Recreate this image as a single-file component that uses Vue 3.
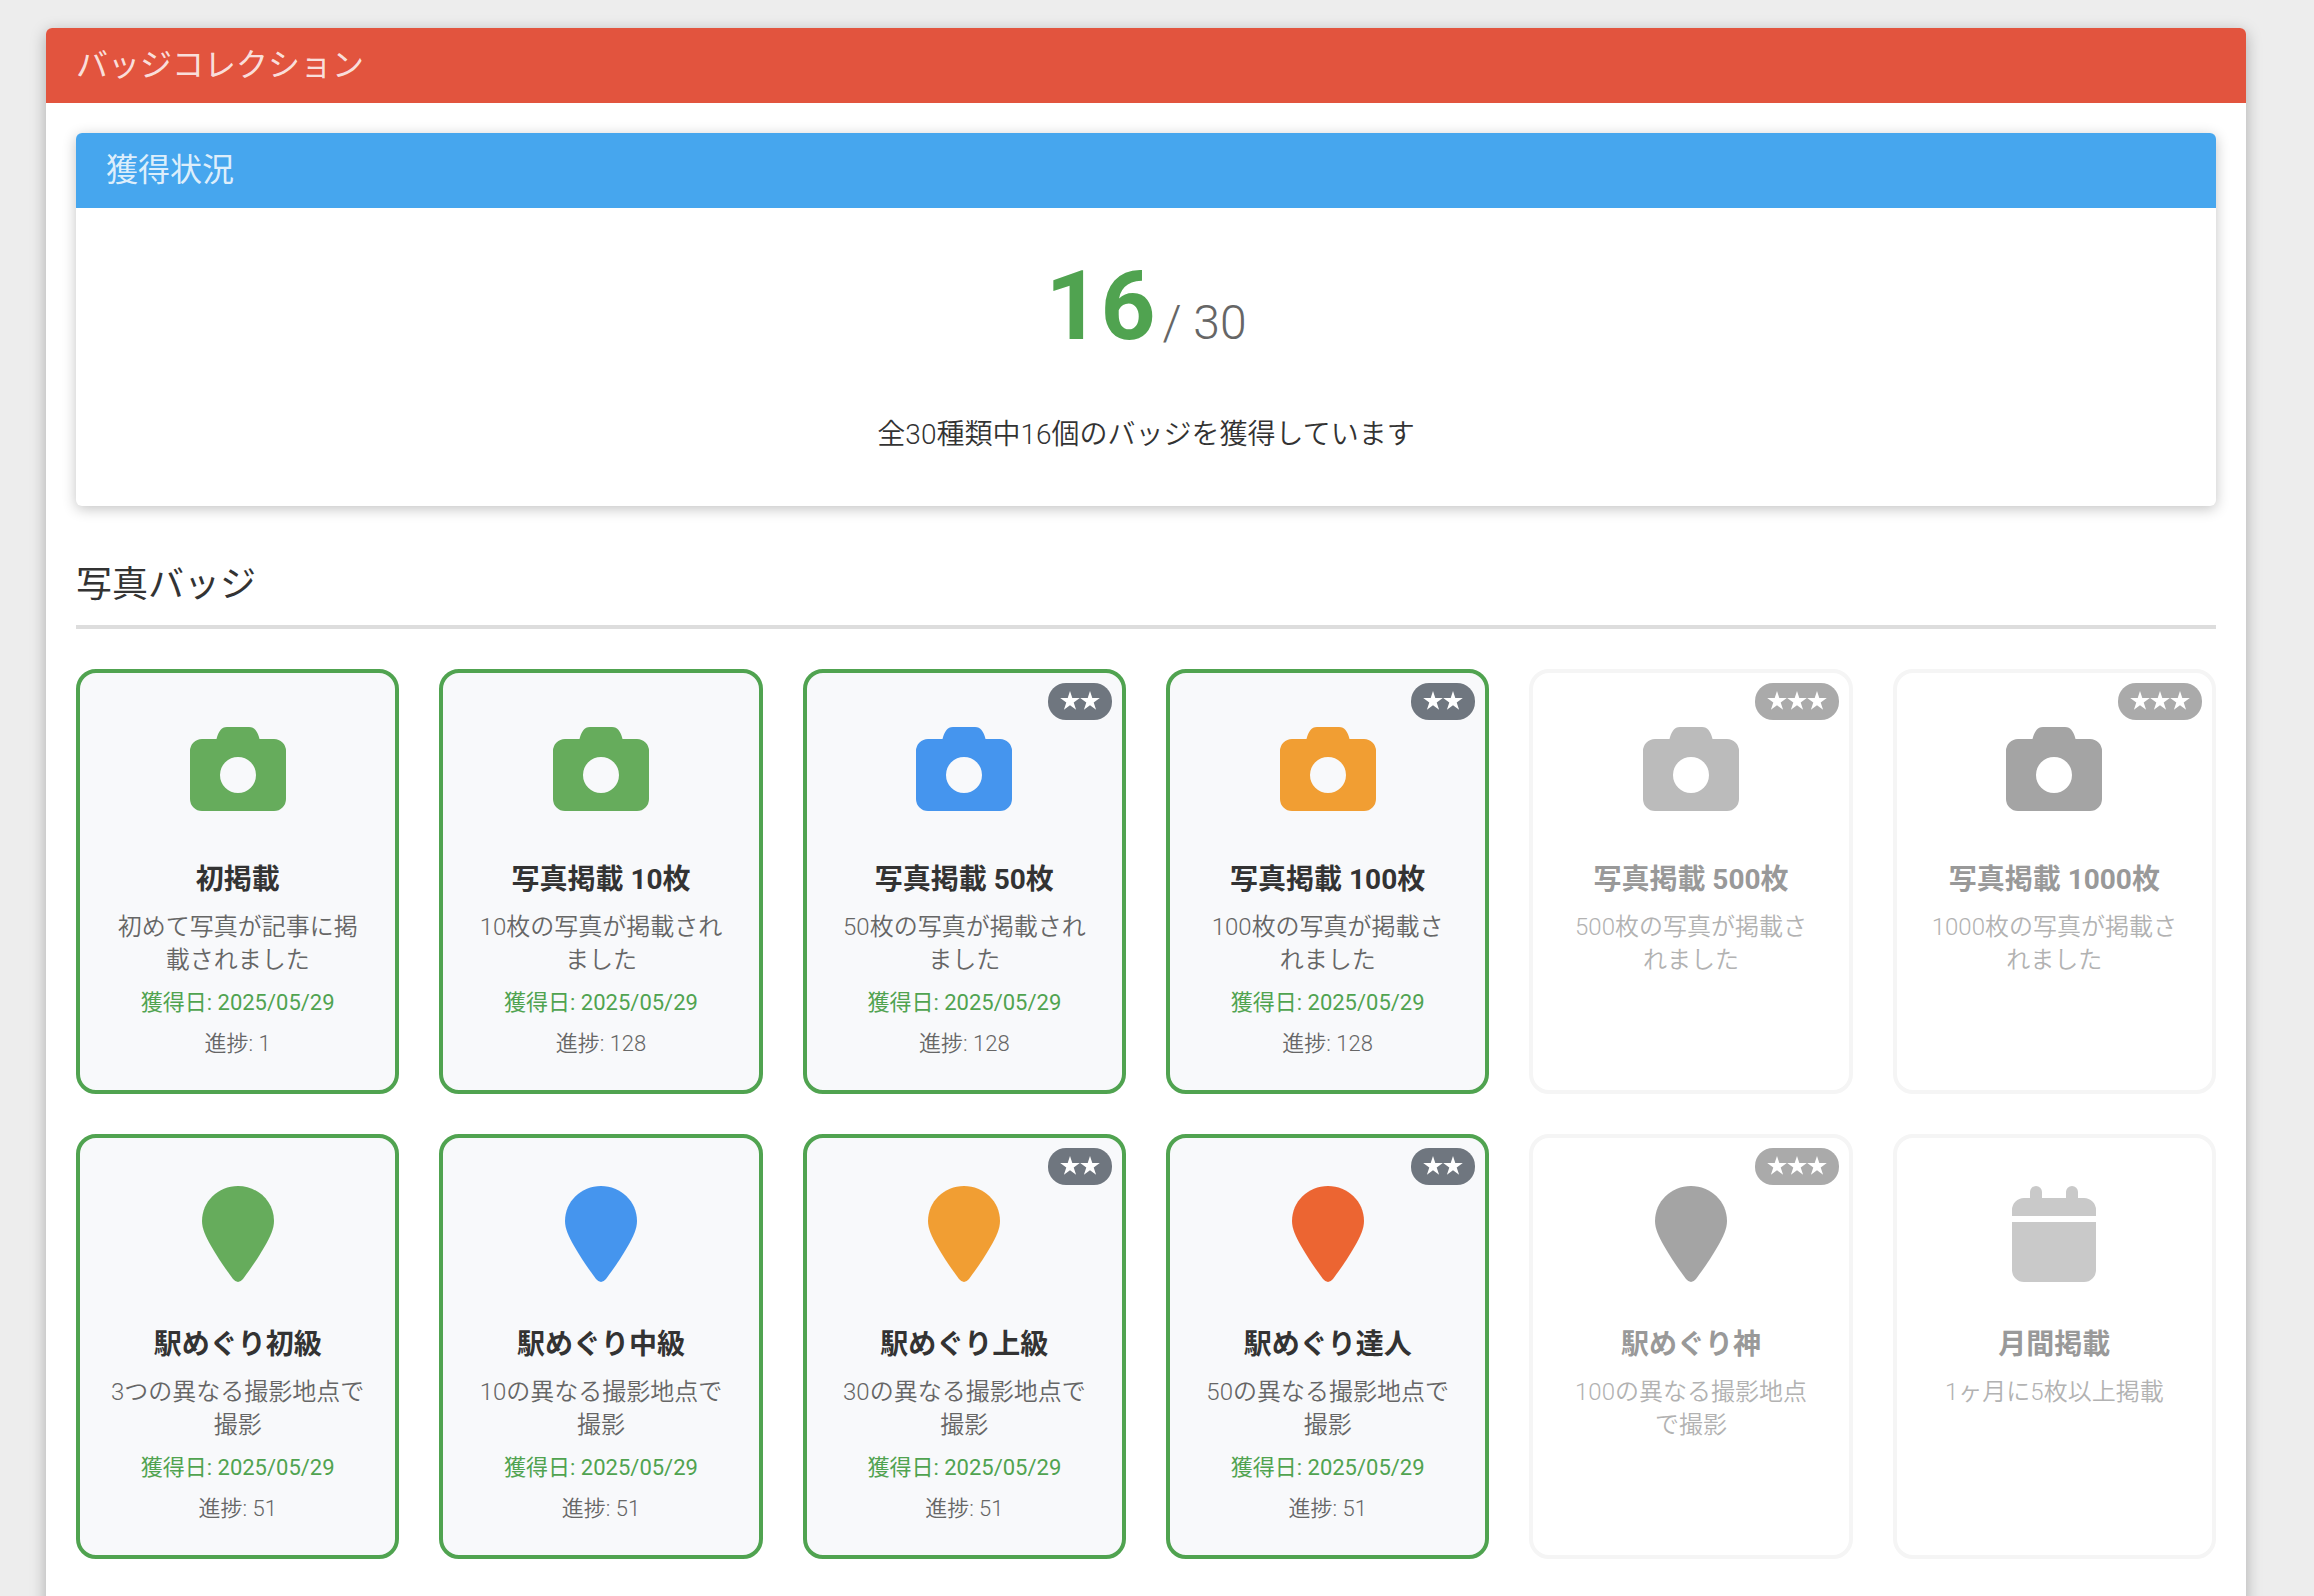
<script setup>
const stages = (list) => list.map((b) => ({ ...b, earned: Boolean(b.progress) }))

const badges = stages([
  { icon: 'camera', color: '#66ac5c', name: '初掲載', desc: '初めて写真が記事に掲載されました', progress: 1, stars: 0 },
  { icon: 'camera', color: '#66ac5c', name: '写真掲載 10枚', desc: '10枚の写真が掲載されました', progress: 128, stars: 0 },
  { icon: 'camera', color: '#4595ee', name: '写真掲載 50枚', desc: '50枚の写真が掲載されました', progress: 128, stars: 2 },
  { icon: 'camera', color: '#f19e33', name: '写真掲載 100枚', desc: '100枚の写真が掲載されました', progress: 128, stars: 2 },
  { icon: 'camera', color: '#bbbbbb', name: '写真掲載 500枚', desc: '500枚の写真が掲載されました', progress: 0, stars: 3 },
  { icon: 'camera', color: '#a4a4a4', name: '写真掲載 1000枚', desc: '1000枚の写真が掲載されました', progress: 0, stars: 3 },
  { icon: 'pin', color: '#66ac5c', name: '駅めぐり初級', desc: '3つの異なる撮影地点で撮影', progress: 51, stars: 0 },
  { icon: 'pin', color: '#4595ee', name: '駅めぐり中級', desc: '10の異なる撮影地点で撮影', progress: 51, stars: 0 },
  { icon: 'pin', color: '#f19e33', name: '駅めぐり上級', desc: '30の異なる撮影地点で撮影', progress: 51, stars: 2 },
  { icon: 'pin', color: '#ec6532', name: '駅めぐり達人', desc: '50の異なる撮影地点で撮影', progress: 51, stars: 2 },
  { icon: 'pin', color: '#a4a4a4', name: '駅めぐり神', desc: '100の異なる撮影地点で撮影', progress: 0, stars: 3 },
  { icon: 'calendar', color: '#c9c9c9', name: '月間掲載', desc: '1ヶ月に5枚以上掲載', progress: 0, stars: 0 },
])

const icons = {
  camera:
    'M12 18H26.5C27.5 14 28.5 11.5 30.5 9C32 7 34 6 37 6H59C62 6 64 7 65.500 9C67.500 11.500 68.500 14 69.500 18H84A12 12 0 0 1 96 30V78A12 12 0 0 1 84 90H12A12 12 0 0 1 0 78V30A12 12 0 0 1 12 18ZM48 36A18 18 0 1 0 48 72A18 18 0 1 0 48 36Z',
  pin: 'M48 0C67.900 0 84 15.500 84 35C84 43 80 51 75.500 59C69 70.500 60.500 83 53 93Q48 99 43 93C35.500 83 27 70.500 20.500 59C16 51 12 43 12 35C12 15.500 28.100 0 48 0Z',
  calendar:
    'M6 30V24A12 12 0 0 1 18 12H24V6A6 6 0 0 1 36 6V12H60V6A6 6 0 0 1 72 6V12H78A12 12 0 0 1 90 24V30ZM6 36H90V84A12 12 0 0 1 78 96H18A12 12 0 0 1 6 84Z',
}
</script>

<template>
  <main class="panel">
    <h1 class="bar bar-red">バッジコレクション</h1>
    <div class="panel-body">
      <section class="summary">
        <h2 class="bar bar-blue">獲得状況</h2>
        <div class="summary-body">
          <div class="count"><strong>16</strong><span>/ 30</span></div>
          <p>全30種類中16個のバッジを獲得しています</p>
        </div>
      </section>

      <h2 class="heading">写真バッジ</h2>
      <ul class="grid">
        <li v-for="b in badges" :key="b.name" class="badge" :class="{ earned: b.earned }">
          <span v-if="b.stars" class="stars">
            <svg v-for="n in b.stars" :key="n" viewBox="0 0 20 20" width="20" height="20" aria-hidden="true">
              <path d="M10 0L12.300 7.100H19.800L13.700 11.500L16.100 18.700L10 14.300L3.900 18.700L6.300 11.500L0.200 7.100H7.700Z" fill="#fff" />
            </svg>
          </span>
          <div class="icon">
            <svg viewBox="0 0 96 96" width="96" height="96" aria-hidden="true">
              <path :d="icons[b.icon]" :fill="b.color" fill-rule="evenodd" />
            </svg>
          </div>
          <h3>{{ b.name }}</h3>
          <p class="desc">{{ b.desc }}</p>
          <template v-if="b.earned">
            <p class="date">獲得日: 2025/05/29</p>
            <p class="progress">進捗: {{ b.progress }}</p>
          </template>
        </li>
      </ul>
    </div>
  </main>
</template>

<style>
body {
  background: #ededed;
}
</style>

<style scoped>
.panel {
  margin: 28px 68px 28px 46px;
  background: #fff;
  border-radius: 6px;
  box-shadow: 0 4px 16px rgba(0, 0, 0, 0.28);
  color: #333;
  font-family: Roboto, "Noto Sans CJK JP", sans-serif;
  font-weight: 350;
}
h1, h2, h3, p, ul {
  margin: 0;
  padding: 0;
}
.bar {
  padding: 0 30px;
  border-radius: 6px 6px 0 0;
  color: rgba(255, 255, 255, 0.84);
  font-size: 32px;
  font-weight: 400;
  line-height: 75px;
}
.bar-red {
  background: #e2543e;
}
.bar-blue {
  background: #46a6ee;
}
.panel-body {
  padding: 30px 30px 80px;
}
.summary {
  border-radius: 6px;
  background: #fff;
  box-shadow: 0 3px 14px rgba(0, 0, 0, 0.24);
}
.summary-body {
  padding: 30px;
  text-align: center;
}
.count {
  display: flex;
  align-items: baseline;
  justify-content: center;
  gap: 7px;
}
.count strong {
  color: #50a350;
  font-size: 96px;
  font-weight: 700;
  line-height: 136px;
}
.count span {
  color: #666;
  font-size: 48px;
  line-height: 48px;
}
.summary-body p {
  margin: 39px 0 19px;
  font-size: 28px;
  line-height: 44px;
}
.heading {
  margin: 54px 0 40px;
  padding-bottom: 15px;
  border-bottom: 4px solid #ddd;
  font-size: 36px;
  font-weight: 400;
  line-height: 50px;
}
.grid {
  display: grid;
  grid-template-columns: repeat(6, 1fr);
  gap: 40px;
  list-style: none;
}
.badge {
  position: relative;
  padding: 30px;
  border: 4px solid #f5f5f5;
  border-radius: 20px;
  text-align: center;
}
.badge.earned {
  border-color: #50a350;
  background: #f8f9fb;
}
.stars {
  position: absolute;
  top: 10px;
  right: 10px;
  display: flex;
  padding: 8px 12px 9px;
  border-radius: 18px;
  background: #aaa;
}
.earned .stars {
  background: #6f767f;
}
.icon {
  display: flex;
  align-items: center;
  justify-content: center;
  height: 132px;
}
h3 {
  margin-top: 25px;
  color: #999;
  font-size: 28px;
  font-weight: 700;
  line-height: 40px;
}
.earned h3 {
  color: #333;
}
.desc {
  margin-top: 11px;
  color: #b2b2b2;
  font-size: 24px;
  line-height: 33px;
}
.earned .desc {
  color: #666;
}
.date {
  margin-top: 10px;
  color: #50a350;
  font-size: 22px;
  font-weight: 400;
  line-height: 32px;
}
.progress {
  margin-top: 9px;
  color: #666;
  font-size: 22px;
  line-height: 32px;
}
</style>
